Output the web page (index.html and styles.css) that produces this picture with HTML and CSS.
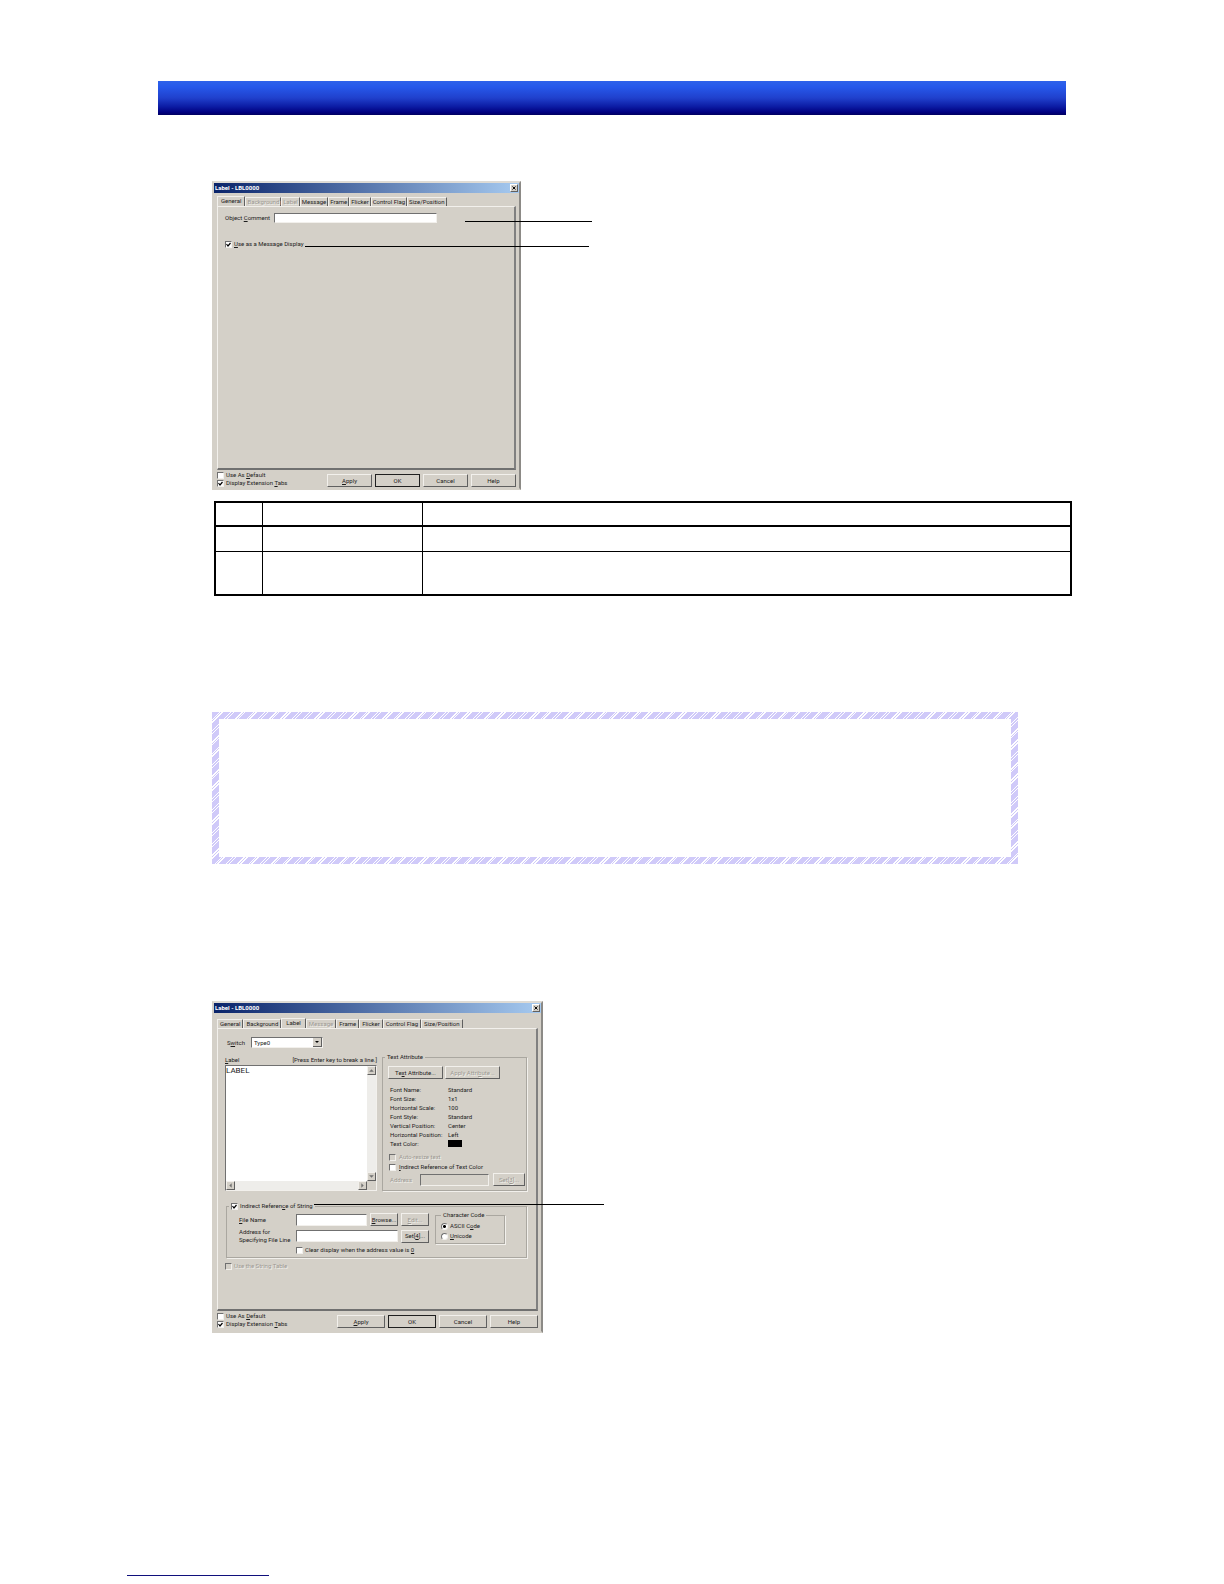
FILE: index.html
```
<!DOCTYPE html>
<html lang="en">
<head>
    <meta charset="UTF-8">
    <meta name="viewport" content="width=device-width, initial-scale=1.0">
    <title>Label - LBL0000</title>
    <link rel="stylesheet" href="styles.css">
</head>
<body>

    <header class="banner"></header>

    <main class="content">

        <!-- General tab -->
        <div class="figure">
            <form class="dialog dialog-general">
                <div class="titlebar">
                    <span>Label - LBL0000</span>
                    <button type="button" class="close" aria-label="Close"><svg viewBox="0 0 8 8"><path d="M2 2l4 4M6 2l-4 4"/></svg></button>
                </div>
                <div class="tabs">
                    <button type="button" class="tab active">General</button>
                    <button type="button" class="tab" disabled>Background</button>
                    <button type="button" class="tab" disabled>Label</button>
                    <button type="button" class="tab">Message</button>
                    <button type="button" class="tab">Frame</button>
                    <button type="button" class="tab">Flicker</button>
                    <button type="button" class="tab">Control Flag</button>
                    <button type="button" class="tab">Size/Position</button>
                </div>
                <div class="panel">
                    <div class="row comment-row">
                        <label for="comment">Object <u>C</u>omment</label>
                        <input type="text" id="comment">
                    </div>
                    <label class="check"><input type="checkbox" checked><span><u>U</u>se as a Message Display</span></label>
                </div>
                <div class="footer">
                    <div class="options">
                        <label class="check"><input type="checkbox"><span>Use As <u>D</u>efault</span></label>
                        <label class="check"><input type="checkbox" checked><span>Display Extension <u>T</u>abs</span></label>
                    </div>
                    <div class="actions">
                        <button type="button" class="btn"><u>A</u>pply</button>
                        <button type="button" class="btn btn-default">OK</button>
                        <button type="button" class="btn">Cancel</button>
                        <button type="button" class="btn">Help</button>
                    </div>
                </div>
            </form>
            <span class="callout callout-comment"></span>
            <span class="callout callout-message"></span>
        </div>

        <table class="items">
            <thead>
                <tr><th class="col-no"></th><th class="col-item"></th><th></th></tr>
            </thead>
            <tbody>
                <tr><td></td><td></td><td></td></tr>
                <tr class="tall"><td></td><td></td><td></td></tr>
            </tbody>
        </table>

        <div class="note"><div class="note-body"></div></div>

        <!-- Label tab -->
        <div class="figure">
            <form class="dialog dialog-label">
                <div class="titlebar">
                    <span>Label - LBL0000</span>
                    <button type="button" class="close" aria-label="Close"><svg viewBox="0 0 8 8"><path d="M2 2l4 4M6 2l-4 4"/></svg></button>
                </div>
                <div class="tabs">
                    <button type="button" class="tab">General</button>
                    <button type="button" class="tab">Background</button>
                    <button type="button" class="tab active">Label</button>
                    <button type="button" class="tab" disabled>Message</button>
                    <button type="button" class="tab">Frame</button>
                    <button type="button" class="tab">Flicker</button>
                    <button type="button" class="tab">Control Flag</button>
                    <button type="button" class="tab">Size/Position</button>
                </div>
                <div class="panel">
                    <div class="row switch-row">
                        <label for="switch">S<u>w</u>itch</label>
                        <select id="switch"><option>Type0</option></select>
                    </div>

                    <div class="columns">
                        <div class="editor">
                            <div class="editor-head">
                                <label for="labelText"><u>L</u>abel</label>
                                <span>[Press Enter key to break a line.]</span>
                            </div>
                            <div class="textbox">
                                <textarea id="labelText">LABEL</textarea>
                                <div class="scroll-y">
                                    <button type="button" class="arrow" aria-label="Up"><svg viewBox="0 0 6 6"><path d="M1 4h4L3 2z"/></svg></button>
                                    <button type="button" class="arrow" aria-label="Down"><svg viewBox="0 0 6 6"><path d="M1 2h4L3 4z"/></svg></button>
                                </div>
                                <div class="scroll-x">
                                    <button type="button" class="arrow" aria-label="Left"><svg viewBox="0 0 6 6"><path d="M4 1v4L2 3z"/></svg></button>
                                    <button type="button" class="arrow" aria-label="Right"><svg viewBox="0 0 6 6"><path d="M2 1v4L4 3z"/></svg></button>
                                </div>
                            </div>
                        </div>

                        <fieldset class="attributes">
                            <legend>Text Attribute</legend>
                            <div class="attr-buttons">
                                <button type="button" class="btn">Te<u>x</u>t Attribute...</button>
                                <button type="button" class="btn" disabled>Apply Attri<u>b</u>ute...</button>
                            </div>
                            <dl>
                                <dt>Font Name:</dt><dd>Standard</dd>
                                <dt>Font Size:</dt><dd>1x1</dd>
                                <dt>Horizontal Scale:</dt><dd>100</dd>
                                <dt>Font Style:</dt><dd>Standard</dd>
                                <dt>Vertical Position:</dt><dd>Center</dd>
                                <dt>Horizontal Position:</dt><dd>Left</dd>
                                <dt>Text Color:</dt><dd><span class="swatch"></span></dd>
                            </dl>
                            <label class="check disabled"><input type="checkbox" disabled><span>Auto-resize text</span></label>
                            <label class="check"><input type="checkbox"><span><u>I</u>ndirect Reference of Text Color</span></label>
                            <div class="row address-row">
                                <label for="colorAddress" class="disabled">Address</label>
                                <input type="text" id="colorAddress" disabled>
                                <button type="button" class="btn" disabled>Set[<u>3</u>]...</button>
                            </div>
                        </fieldset>
                    </div>

                    <fieldset class="indirect">
                        <legend><label class="check"><input type="checkbox" checked><span>Indirect Referen<u>c</u>e of String</span></label></legend>
                        <div class="file-rows">
                            <div class="row">
                                <label for="fileName"><u>F</u>ile Name</label>
                                <input type="text" id="fileName">
                                <button type="button" class="btn"><u>B</u>rowse...</button>
                                <button type="button" class="btn" disabled><u>E</u>dit...</button>
                            </div>
                            <div class="row">
                                <label for="fileLine">Address for<br>Specifying File Line</label>
                                <input type="text" id="fileLine">
                                <button type="button" class="btn">Set[<u>4</u>]...</button>
                            </div>
                            <label class="check clear-check"><input type="checkbox"><span>Clear display when the address value is <u>0</u></span></label>
                        </div>
                        <fieldset class="charcode">
                            <legend>Character Code</legend>
                            <label class="check"><input type="radio" name="code" checked><span>ASCII C<u>o</u>de</span></label>
                            <label class="check"><input type="radio" name="code"><span><u>U</u>nicode</span></label>
                        </fieldset>
                    </fieldset>

                    <label class="check disabled"><input type="checkbox" disabled><span>Use the String Table</span></label>
                </div>
                <div class="footer">
                    <div class="options">
                        <label class="check"><input type="checkbox"><span>Use As <u>D</u>efault</span></label>
                        <label class="check"><input type="checkbox" checked><span>Display Extension <u>T</u>abs</span></label>
                    </div>
                    <div class="actions">
                        <button type="button" class="btn"><u>A</u>pply</button>
                        <button type="button" class="btn btn-default">OK</button>
                        <button type="button" class="btn">Cancel</button>
                        <button type="button" class="btn">Help</button>
                    </div>
                </div>
            </form>
            <span class="callout callout-string"></span>
        </div>

    </main>

    <footer class="page-footer"><hr></footer>

</body>
</html>
```
FILE: styles.css
```
* {margin: 0; padding: 0; box-sizing: border-box;}

body {
    min-height: 100vh;
    padding-top: 81px;
    background: #fff;
    color: #1c1c1c;
    font-family: Roboto, "Liberation Sans", sans-serif;
    font-size: 6px;
    line-height: 8px;
    display: flex;
    flex-direction: column;
}

.banner {
    height: 34px;
    margin: 0 158px;
    background: linear-gradient(#2e62ea, #2658ea 18%, #2040cc 50%, #0c1ca4 75%, #000080 92%, #00005f);
}

.content {
    margin: 66px 152px 0 212px;
}

.figure {position: relative;}

/* Dialog window */
.dialog {
    border: 2px solid #d4d0c8;
    border-right-color: #8c8a86;
    border-top-color: #dedbd5;
    background: #d4d0c8;
    white-space: nowrap;
}

.dialog-general {width: 309px;}
.dialog-label {width: 331px;}

.titlebar {
    height: 10px;
    padding: 0 1px;
    display: flex;
    justify-content: space-between;
    align-items: center;
    background: linear-gradient(90deg, #0a246a, #a6caf0);
    color: #fff;
    font-weight: bold;
}

button, input, select, textarea {
    font: inherit;
    color: inherit;
    appearance: none;
    border: none;
    border-radius: 0;
    outline: none;
}

.close {
    width: 8px;
    height: 8px;
    background: #d4d0c8;
    border: 1px solid;
    border-color: #fff #606060 #606060 #fff;
    display: flex;
}

.close svg {
    width: 100%;
    stroke: #000;
    stroke-width: 1.3;
}

.tabs {
    display: flex;
    align-items: flex-end;
    margin: 3px 3px 0;
}

.tab {
    height: 9px;
    padding: 0 1px;
    background: #d4d0c8;
    border: 1px solid;
    border-color: #f2f0ec #606060 transparent #f2f0ec;
    border-bottom: none;
}

.tab.active {
    height: 10px;
    padding: 0 3px 1px;
}

:disabled, .disabled {
    color: #9c9993;
    text-shadow: 1px 1px 0 #f2f0ec;
}

.panel {
    margin: 0 3px;
    border: 1px solid #f2f0ec;
    border-right: 2px solid #808080;
    border-bottom: 2px solid #707070;
}

.dialog-general .panel {
    min-height: 264px;
    padding: 6px 7px;
}

.row {
    display: flex;
    align-items: center;
}

input[type="text"], select, .textbox {
    background: #fff;
    border: 1px solid;
    border-color: #707070 #f2f0ec #f2f0ec #707070;
}

input[type="text"]:disabled {background: #d4d0c8;}

.check {
    display: flex;
    align-items: center;
    gap: 2px;
}

.check input {
    width: 7px;
    height: 7px;
    flex: none;
    background: #fff center / 5px no-repeat;
    border: 1px solid;
    border-color: #707070 #f2f0ec #f2f0ec #707070;
}

.check input:disabled {background-color: #d4d0c8;}

.check input[type="checkbox"]:checked {
    background-image: url("data:image/svg+xml,%3Csvg xmlns='http://www.w3.org/2000/svg' viewBox='0 0 5 5'%3E%3Cpath d='M.5 2l1.5 2L4.5 1' fill='none' stroke='%23000' stroke-width='1.2'/%3E%3C/svg%3E");
}

.check input[type="radio"] {border-radius: 50%;}

.check input[type="radio"]:checked {
    background-image: radial-gradient(circle, #000 1px, transparent 2px);
}

.comment-row {
    margin-bottom: 17px;
}

.comment-row input {
    width: 163px;
    height: 10px;
}

.comment-row label {width: 49px;}

.footer {
    display: flex;
    justify-content: space-between;
    padding: 1px 3px 0;
}

.dialog-general .footer {height: 18px;}
.dialog-label .footer {height: 20px;}

.actions {
    display: flex;
    gap: 3px;
    padding-top: 3px;
}

.btn {
    height: 13px;
    background: #d4d0c8;
    border: 1px solid;
    border-color: #f2f0ec #606060 #606060 #f2f0ec;
    text-align: center;
}

.btn-default {border: 1px solid #202020;}

.actions .btn {width: 45px;}
.dialog-label .actions .btn {width: 48px;}

/* Leader lines drawn over the dialogs */
.callout {
    position: absolute;
    height: 1px;
    background: #000;
}

.callout-comment {left: 253px; top: 40px; width: 127px;}
.callout-message {left: 93px; top: 65px; width: 284px;}
.callout-string {left: 102px; top: 203px; width: 290px;}

/* Item table */
.items {
    width: calc(100% - 2px);
    margin: 11px 0 0 2px;
    table-layout: fixed;
    border-collapse: collapse;
    border: 2px solid #000;
}

.items th, .items td {
    height: 25px;
    border: 1px solid #000;
}

.items thead {border-bottom: 2px solid #000;}
.items th {height: 24px;}
.items .tall td {height: 44px;}
.items .col-no {width: 47px;}
.items .col-item {width: 160px;}

/* Hatched note frame */
.note {
    margin: 116px 54px 137px 0;
    padding: 7px;
    background: repeating-linear-gradient(135deg, #d0caf9 0 5px, #fff 5px 6px, #d0caf9 6px 7px, #fff 7px 8px);
}

.note-body {
    min-height: 138px;
    background: #fff;
}

/* Label tab contents */
.dialog-label .tabs {margin-top: 5px;}
.dialog-label .tab {padding: 0 2px;}
.dialog-label .tab.active {padding: 0 4px 1px;}

.dialog-label .panel {
    min-height: 283px;
    padding: 8px 9px 0 7px;
}

.switch-row label {
    width: 26px;
    padding-left: 2px;
}

.switch-row select {
    width: 72px;
    height: 11px;
    padding-left: 2px;
    background: #fff url("data:image/svg+xml,%3Csvg xmlns='http://www.w3.org/2000/svg' viewBox='0 0 9 9'%3E%3Cpath d='M0 0h9v9H0z' fill='%23606060'/%3E%3Cpath d='M0 0h8v8H0z' fill='%23d4d0c8'/%3E%3Cpath d='M2 3h4L4 5z'/%3E%3C/svg%3E") right / 9px no-repeat;
}

.columns {
    display: flex;
    gap: 5px;
    margin-top: 5px;
}

.editor {
    width: 152px;
    padding-top: 3px;
}

.editor-head {
    display: flex;
    justify-content: space-between;
    margin-bottom: 1px;
}

.textbox {
    height: 126px;
    display: grid;
    grid-template: 1fr 9px / 1fr 9px;
    background: #d4d0c8;
}

.textbox textarea {
    background: #fff;
    resize: none;
    overflow: hidden;
    padding: 1px 0;
    font-size: 8px;
}

.scroll-y, .scroll-x {
    display: flex;
    justify-content: space-between;
    background: #eeedea;
}

.scroll-y {flex-direction: column;}

.arrow {
    width: 9px;
    height: 9px;
    background: #d4d0c8;
    border: 1px solid;
    border-color: #f2f0ec #606060 #606060 #f2f0ec;
    display: flex;
}

.arrow svg {
    width: 100%;
    fill: #707070;
}

fieldset {
    min-width: 0;
    border: 1px solid #aaa7a0;
    box-shadow: 1px 1px 0 #f2f0ec;
}

legend {padding: 0 2px;}

.attributes {
    flex: 1;
    padding: 5px 1px 0 5px;
}

.attributes legend {margin-left: -3px;}

.attr-buttons {
    display: flex;
    gap: 2px;
    margin-bottom: 7px;
}

.attr-buttons .btn {width: 55px;}

.attributes dl {
    display: grid;
    grid-template-columns: 58px 1fr;
    grid-auto-rows: 9px;
    padding-left: 2px;
    margin-bottom: 4px;
}

.swatch {
    display: block;
    width: 14px;
    height: 7px;
    background: #000;
}

.attributes .check {
    gap: 3px;
    margin: 0 0 2px 1px;
}

.address-row label {
    width: 32px;
    padding-left: 2px;
}

.address-row input {
    width: 69px;
    height: 12px;
    margin-right: 4px;
}

.address-row .btn {width: 32px;}

.indirect {
    margin: 11px 0 4px 1px;
    padding: 0 12px 3px;
    display: flex;
    align-items: flex-start;
    gap: 6px;
}

.indirect > legend {margin-left: -10px;}

.file-rows {
    width: 190px;
    padding-top: 3px;
}

.file-rows .row {
    gap: 3px;
    margin-bottom: 2px;
}

.file-rows .row label {width: 54px;}
.file-rows .btn {width: 28px;}

.file-rows input[type="text"] {
    flex: 1;
    height: 12px;
    min-width: 0;
}

.clear-check {margin-left: 57px;}

.charcode {
    width: 70px;
    margin-top: 1px;
    padding: 3px 5px 1px;
}

.charcode .check {margin-bottom: 2px;}

/* Page footer rule */
.page-footer {
    margin: auto 0 8px 127px;
}

.page-footer hr {
    width: 142px;
    border: none;
    border-top: 1px solid #10107c;
}
```
